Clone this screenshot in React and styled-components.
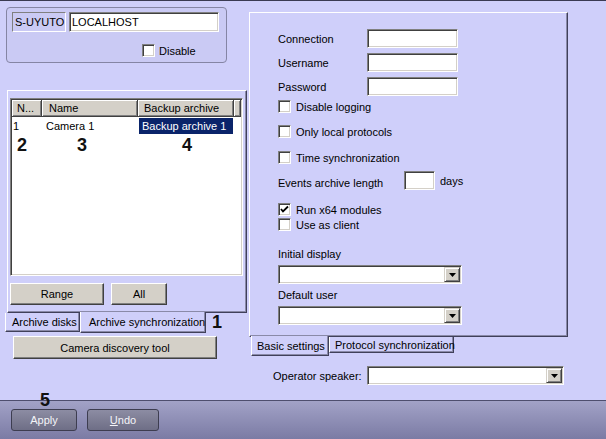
import React from "react";
import styled, { createGlobalStyle, css } from "styled-components";

const LAV = "#cfcffa";
const DARK = "#40405a";
const MID = "#8a8aa8";

const GlobalStyle = createGlobalStyle`
  html, body { margin: 0; padding: 0; background: ${LAV}; }
  body { font-family: "Liberation Sans", Arial, sans-serif; font-size: 11px; color: #000; }
  * { box-sizing: border-box; }
`;

const sunken = css`
  border: 1px solid;
  border-color: #808080 #ffffff #ffffff #808080;
  box-shadow: inset 1px 1px 0 #404040, inset -1px -1px 0 #d4d0c8;
`;

const raised = css`
  border: 1px solid;
  border-color: #ffffff #404040 #404040 #ffffff;
  box-shadow: inset -1px -1px 0 #808080;
`;

const Frame = styled.div`
  position: relative;
  width: 606px;
  height: 439px;
  overflow: hidden;
  background: ${LAV};
  display: flex;
  flex-direction: column;
`;

const TopEdge = styled.div`
  height: 1px;
  flex-shrink: 0;
  background: #3a3a52;
`;

const Main = styled.div`
  flex: 1;
  display: flex;
  gap: 2px;
  padding: 6px 0 0 7px;
`;

const LeftCol = styled.div`
  width: 240px;
  display: flex;
  flex-direction: column;
`;

const GroupBox = styled.div`
  width: 221px;
  height: 56px;
  margin-left: -1px;
  border: 1px solid #8585a4;
  border-radius: 4px;
  background: #cacaf4;
  padding: 4px 0 0 5px;
`;

const HostRow = styled.div`
  display: flex;
  gap: 3px;
`;

const ServerTag = styled.div`
  width: 54px;
  height: 20px;
  border: 1px solid;
  border-color: #808080 #ffffff #ffffff #808080;
  padding-left: 2px;
  display: flex;
  align-items: center;
`;

const TextField = styled.div`
  ${sunken};
  width: ${(p) => p.$w}px;
  height: ${(p) => p.$h || 19}px;
  background: #fff;
  padding-left: 2px;
  display: flex;
  align-items: center;
  flex-shrink: 0;
`;

const CheckRow = styled.div`
  display: flex;
  align-items: center;
  height: 13px;
  gap: ${(p) => p.$gap || 5}px;
  margin-top: ${(p) => p.$mt || 0}px;
  margin-left: ${(p) => p.$ml || 0}px;
  white-space: nowrap;
`;

const Box = styled.div`
  ${sunken};
  width: 13px;
  height: 13px;
  background: #fff;
  flex-shrink: 0;
  display: flex;
  align-items: center;
  justify-content: center;
`;

const CheckBox = ({ checked }) => (
  <Box>
    {checked && (
      <svg width="9" height="9" viewBox="0 0 9 9">
        <path d="M1 4 L3 6.5 L8 1.5" fill="none" stroke="#000" strokeWidth="1.8" />
      </svg>
    )}
  </Box>
);

const TabPanel = styled.div`
  margin-top: 27px;
  height: 223px;
  border-top: 1px solid #fff;
  border-left: 1px solid #fff;
  border-right: 1px solid ${DARK};
  border-bottom: 1px solid ${DARK};
  box-shadow: inset -1px -1px 0 ${MID};
  padding: 7px 0 0 2px;
`;

const ListView = styled.div`
  ${sunken};
  width: 233px;
  height: 178px;
  background: #fff;
  padding: 1px;
`;

const ListHeader = styled.div`
  display: flex;
  height: 17px;
`;

const HeaderCell = styled.div`
  width: ${(p) => (p.$w ? `${p.$w}px` : "auto")};
  flex: ${(p) => (p.$w ? "none" : "1")};
  height: 17px;
  background: #d4d0c8;
  border-right: 1px solid #404040;
  border-bottom: 1px solid #404040;
  box-shadow: inset 1px 1px 0 #fff, inset -1px -1px 0 #808080;
  padding-left: ${(p) => p.$pl || 5}px;
  display: flex;
  align-items: center;
  white-space: nowrap;
  overflow: hidden;
`;

const DataRow = styled.div`
  display: flex;
  height: 16px;
  margin-top: 1px;
`;

const Cell = styled.div`
  width: ${(p) => p.$w}px;
  padding-left: ${(p) => p.$pl || 0}px;
  display: flex;
  align-items: center;
  white-space: nowrap;
`;

const Selected = styled.div`
  margin-left: 1px;
  width: 94px;
  height: 16px;
  background: #0a246a;
  color: #fff;
  padding-left: 3px;
  display: flex;
  align-items: center;
  white-space: nowrap;
`;

const ButtonRow = styled.div`
  display: flex;
  gap: 7px;
  margin-top: 7px;
`;

const WinButton = styled.div`
  ${raised};
  width: ${(p) => p.$w}px;
  height: ${(p) => p.$h || 22}px;
  margin-top: ${(p) => p.$mt || 0}px;
  margin-left: ${(p) => p.$ml || 0}px;
  background: #d4d0c8;
  display: flex;
  align-items: center;
  justify-content: center;
  white-space: nowrap;
  flex-shrink: 0;
`;

const TabStrip = styled.div`
  display: flex;
  align-items: flex-start;
  margin-left: ${(p) => p.$ml}px;
`;

const Tab = styled.div`
  position: relative;
  z-index: ${(p) => (p.$active ? 1 : 0)};
  width: ${(p) => p.$w}px;
  height: ${(p) => p.$h}px;
  margin-top: ${(p) => (p.$active ? -1 : 0)}px;
  background: ${LAV};
  border-left: 1px solid #fff;
  border-right: 1px solid ${DARK};
  border-bottom: 1px solid ${DARK};
  box-shadow: inset -1px -1px 0 ${MID};
  padding-left: ${(p) => p.$pl}px;
  display: flex;
  align-items: center;
  white-space: nowrap;
`;

const RightCol = styled.div`
  width: 319px;
  margin-top: 5px;
  display: flex;
  flex-direction: column;
`;

const SettingsPanel = styled.div`
  height: 325px;
  border-top: 1px solid #fff;
  border-left: 1px solid #fff;
  border-right: 1px solid ${DARK};
  border-bottom: 1px solid ${DARK};
  box-shadow: inset -1px -1px 0 ${MID};
  padding: 16px 0 0 28px;
  display: flex;
  flex-direction: column;
`;

const FieldRow = styled.div`
  display: flex;
  align-items: center;
  height: 19px;
  margin-top: ${(p) => p.$mt || 0}px;
  margin-left: ${(p) => p.$ml || 0}px;
`;

const FieldLabel = styled.div`
  width: ${(p) => (p.$w ? `${p.$w}px` : "auto")};
  margin-top: ${(p) => p.$dy || 0}px;
  margin-left: ${(p) => p.$ml || 0}px;
  white-space: nowrap;
  flex-shrink: 0;
`;

const Caption = styled.div`
  height: 13px;
  line-height: 13px;
  margin-top: ${(p) => p.$mt}px;
  white-space: nowrap;
`;

const ComboShell = styled.div`
  ${sunken};
  width: ${(p) => p.$w}px;
  height: 19px;
  margin-top: ${(p) => p.$mt || 0}px;
  background: #fff;
  padding: 1px;
  display: flex;
  justify-content: flex-end;
  flex-shrink: 0;
`;

const ComboArrow = styled.div`
  width: 16px;
  height: 15px;
  background: #d4d0c8;
  border: 1px solid;
  border-color: #d4d0c8 #404040 #404040 #d4d0c8;
  box-shadow: inset 1px 1px 0 #fff, inset -1px -1px 0 #808080;
  display: flex;
  align-items: center;
  justify-content: center;
`;

const Combo = ({ w, mt }) => (
  <ComboShell $w={w} $mt={mt}>
    <ComboArrow>
      <svg width="7" height="4" viewBox="0 0 7 4">
        <polygon points="0,0 7,0 3.5,4" fill="#000" />
      </svg>
    </ComboArrow>
  </ComboShell>
);

const BottomBar = styled.div`
  height: 39px;
  flex-shrink: 0;
  border-top: 1px solid #4e4e6e;
  background: linear-gradient(#a2a2c7, #7b7ba4);
  display: flex;
  gap: 10px;
  padding: 8px 0 0 11px;
`;

const BarButton = styled.div`
  width: ${(p) => p.$w}px;
  height: 22px;
  border: 1px solid #3d3d50;
  border-radius: 3px;
  background: linear-gradient(#8c8ca3, #6e6e86);
  color: #f4f4f8;
  display: flex;
  align-items: center;
  justify-content: center;
`;

const Marker = styled.div`
  position: absolute;
  left: ${(p) => p.$x}px;
  top: ${(p) => p.$y}px;
  font-family: "Liberation Sans", Arial, sans-serif;
  font-weight: bold;
  font-size: 18px;
  line-height: 1;
  color: #111;
  z-index: 5;
`;

export default function App() {
  return (
    <>
      <GlobalStyle />
      <Frame>
        <TopEdge />
        <Main>
          <LeftCol>
            <GroupBox>
              <HostRow>
                <ServerTag>S-UYUTO</ServerTag>
                <TextField $w={150} $h={20}>LOCALHOST</TextField>
              </HostRow>
              <CheckRow $mt={12} $ml={130} $gap={4}>
                <CheckBox />
                <span>Disable</span>
              </CheckRow>
            </GroupBox>

            <TabPanel>
              <ListView>
                <ListHeader>
                  <HeaderCell $w={30}>N...</HeaderCell>
                  <HeaderCell $w={96} $pl={7}>Name</HeaderCell>
                  <HeaderCell $w={96} $pl={6}>Backup archive</HeaderCell>
                  <HeaderCell />
                </ListHeader>
                <DataRow>
                  <Cell $w={30} $pl={1}>1</Cell>
                  <Cell $w={96} $pl={4}>Camera 1</Cell>
                  <Selected>Backup archive 1</Selected>
                </DataRow>
              </ListView>
              <ButtonRow>
                <WinButton $w={94}>Range</WinButton>
                <WinButton $w={56}>All</WinButton>
              </ButtonRow>
            </TabPanel>

            <TabStrip $ml={-2}>
              <Tab $w={75} $h={19} $pl={6}>Archive disks</Tab>
              <Tab $active $w={126} $h={21} $pl={8}>Archive synchronization</Tab>
            </TabStrip>

            <WinButton $w={204} $h={23} $mt={3} $ml={6}>
              Camera discovery tool
            </WinButton>
          </LeftCol>

          <RightCol>
            <SettingsPanel>
              <FieldRow>
                <FieldLabel $w={89}>Connection</FieldLabel>
                <TextField $w={91} />
              </FieldRow>
              <FieldRow $mt={5}>
                <FieldLabel $w={89}>Username</FieldLabel>
                <TextField $w={91} />
              </FieldRow>
              <FieldRow $mt={5}>
                <FieldLabel $w={89}>Password</FieldLabel>
                <TextField $w={91} />
              </FieldRow>
              <CheckRow $mt={4}>
                <CheckBox />
                <span>Disable logging</span>
              </CheckRow>
              <CheckRow $mt={12}>
                <CheckBox />
                <span>Only local protocols</span>
              </CheckRow>
              <CheckRow $mt={13}>
                <CheckBox />
                <span>Time synchronization</span>
              </CheckRow>
              <FieldRow $mt={7}>
                <FieldLabel $w={126} $dy={5}>Events archive length</FieldLabel>
                <TextField $w={31} />
                <FieldLabel $ml={5}>days</FieldLabel>
              </FieldRow>
              <CheckRow $mt={13}>
                <CheckBox checked />
                <span>Run x64 modules</span>
              </CheckRow>
              <CheckRow $mt={2}>
                <CheckBox />
                <span>Use as client</span>
              </CheckRow>
              <Caption $mt={17}>Initial display</Caption>
              <Combo w={184} mt={4} />
              <Caption $mt={5}>Default user</Caption>
              <Combo w={184} mt={4} />
            </SettingsPanel>

            <TabStrip $ml={2}>
              <Tab $active $w={78} $h={20} $pl={5}>Basic settings</Tab>
              <Tab $w={125} $h={16} $pl={5}>Protocol synchronization</Tab>
            </TabStrip>

            <FieldRow $mt={10} $ml={24}>
              <FieldLabel $w={94}>Operator speaker:</FieldLabel>
              <Combo w={197} />
            </FieldRow>
          </RightCol>
        </Main>

        <BottomBar>
          <BarButton $w={66}>Apply</BarButton>
          <BarButton $w={72}>
            <span>
              <u>U</u>ndo
            </span>
          </BarButton>
        </BottomBar>

        <Marker $x={17} $y={136}>2</Marker>
        <Marker $x={77} $y={136}>3</Marker>
        <Marker $x={182} $y={136}>4</Marker>
        <Marker $x={212} $y={313}>1</Marker>
        <Marker $x={40} $y={391}>5</Marker>
      </Frame>
    </>
  );
}
